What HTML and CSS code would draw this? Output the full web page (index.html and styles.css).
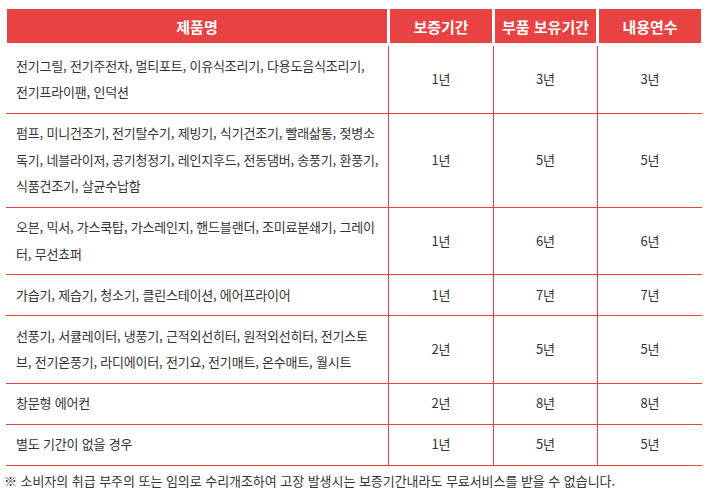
FILE: index.html
```
<!DOCTYPE html>
<html lang="ko">
<head>
<meta charset="utf-8">
<link rel="stylesheet" href="styles.css">
</head>
<body>
<table class="warranty">
  <colgroup>
    <col class="c-name"><col class="c-num"><col class="c-num2"><col class="c-num3">
  </colgroup>
  <thead>
    <tr><th>제품명</th><th>보증기간</th><th>부품 보유기간</th><th>내용연수</th></tr>
  </thead>
  <tbody>
    <tr><td>전기그릴, 전기주전자, 멀티포트, 이유식조리기, 다용도음식조리기,<br>전기프라이팬, 인덕션</td><td>1년</td><td>3년</td><td>3년</td></tr>
    <tr><td>펌프, 미니건조기, 전기탈수기, 제빙기, 식기건조기, 빨래삶통, 젖병소<br>독기, 네블라이저, 공기청정기, 레인지후드, 전동댐버, 송풍기, 환풍기,<br>식품건조기, 살균수납함</td><td>1년</td><td>5년</td><td>5년</td></tr>
    <tr><td>오븐, 믹서, 가스쿡탑, 가스레인지, 핸드블랜더, 조미료분쇄기, 그레이<br>터, 무선쵸퍼</td><td>1년</td><td>6년</td><td>6년</td></tr>
    <tr><td>가습기, 제습기, 청소기, 클린스테이션, 에어프라이어</td><td>1년</td><td>7년</td><td>7년</td></tr>
    <tr><td>선풍기, 서큘레이터, 냉풍기, 근적외선히터, 원적외선히터, 전기스토<br>브, 전기온풍기, 라디에이터, 전기요, 전기매트, 온수매트, 월시트</td><td>2년</td><td>5년</td><td>5년</td></tr>
    <tr><td>창문형 에어컨</td><td>2년</td><td>8년</td><td>8년</td></tr>
    <tr><td>별도 기간이 없을 경우</td><td>1년</td><td>5년</td><td>5년</td></tr>
  </tbody>
</table>
<p class="note">※ 소비자의 취급 부주의 또는 임의로 수리개조하여 고장 발생시는 보증기간내라도 무료서비스를 받을 수 없습니다.</p>
</body>
</html>
```
FILE: styles.css
```
html, body {
  margin: 0;
  padding: 0;
  background: #fff;
}
body {
  font-family: "Noto Sans CJK KR", "Noto Sans", sans-serif;
  color: #333;
  font-size: 13px;
}
.warranty {
  margin: 9px 0 0 6px;
  width: 696px;
  border-collapse: separate;
  border-spacing: 0;
  table-layout: fixed;
}
.c-name { width: 382px; }
.c-num { width: 105px; }
.c-num2 { width: 104px; }
.c-num3 { width: 105px; }
.warranty th {
  height: 34px;
  padding: 0;
  background: #e94242;
  color: #fff;
  font-size: 15px;
  font-weight: 700;
  text-align: center;
  vertical-align: middle;
  border-bottom: 3px solid #fff;
  border-right: 1px solid #fff;
  border-left: 2px solid #fff;
}
.warranty th:first-child { border-left: 1px solid #fff; }
.warranty th:last-child { border-right: 1px solid #fff; }
.warranty td {
  padding: 6.75px 10px;
  line-height: 26.5px;
  border-bottom: 1px solid #e94242;
  text-align: center;
  vertical-align: middle;
}
.warranty td:first-child {
  text-align: left;
  padding-right: 2px;
  white-space: nowrap;
  letter-spacing: -0.2px;
}
.warranty td + td {
  border-left: 1px solid #e94242;
}
.note {
  margin: 5px 0 0 4px;
  font-size: 13px;
  line-height: 20px;
  letter-spacing: -0.05px;
}
```
